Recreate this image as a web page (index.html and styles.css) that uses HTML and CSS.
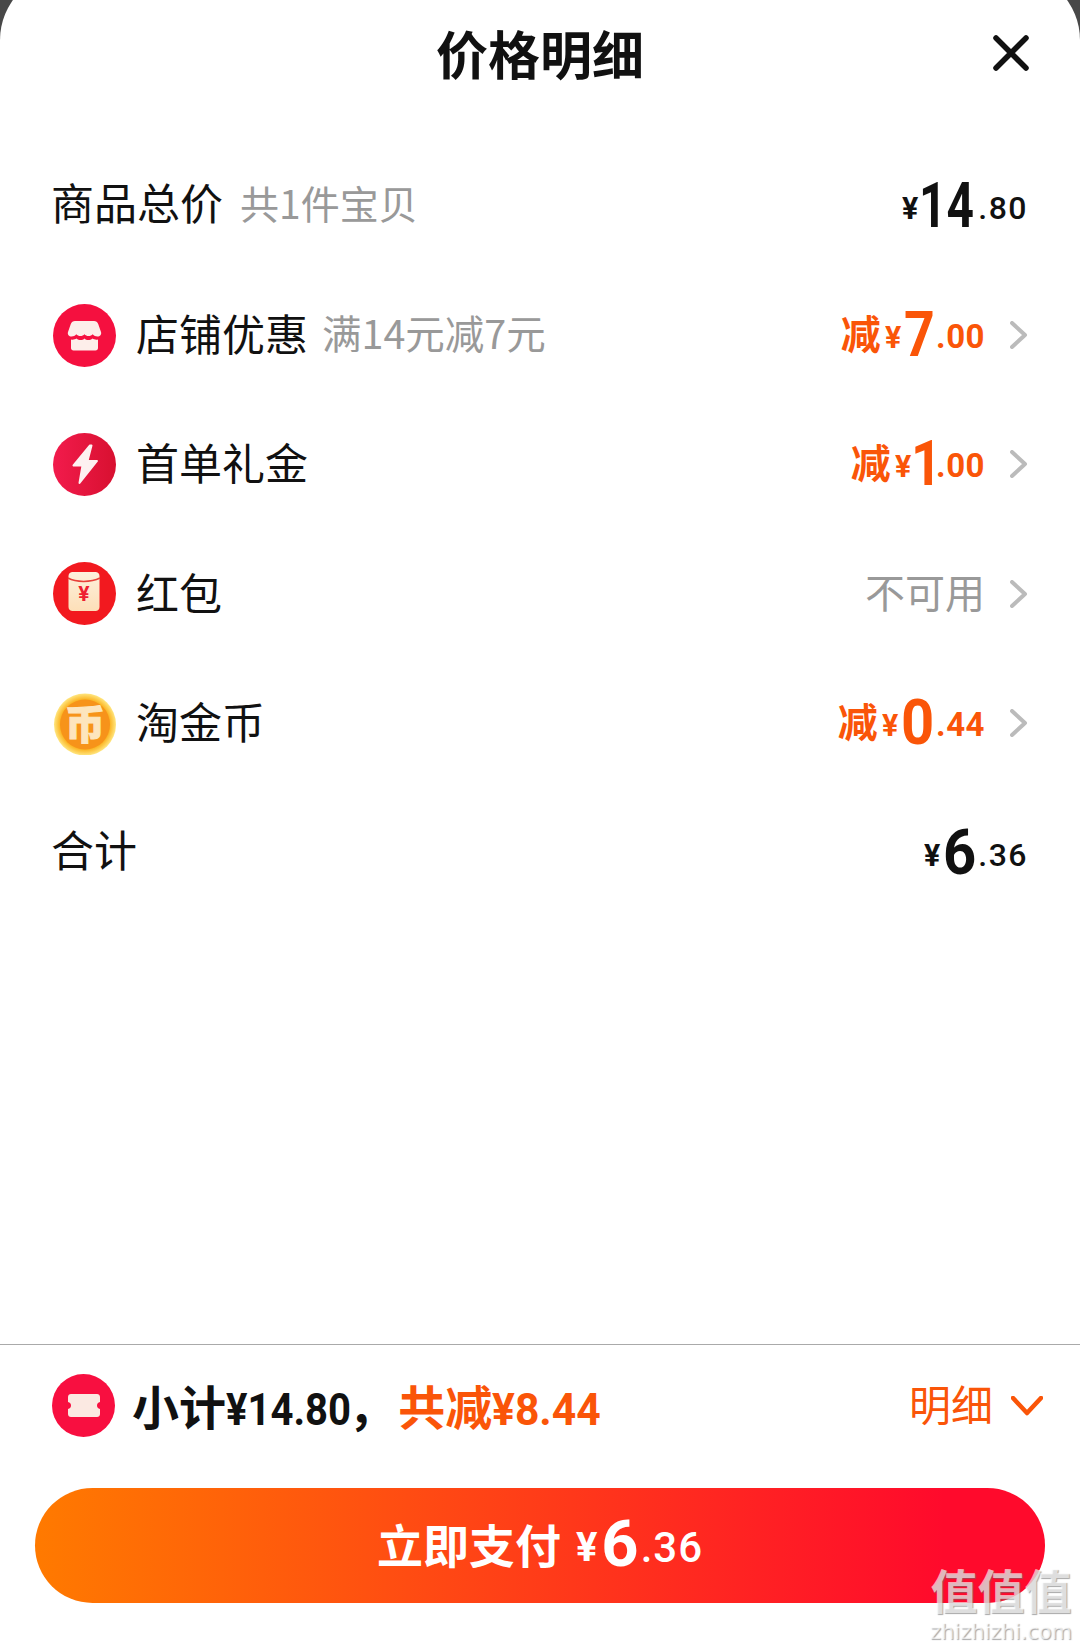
FILE: index.html
```html
<!DOCTYPE html>
<html lang="zh-CN">
<head>
<meta charset="utf-8">
<title>价格明细</title>
<link rel="stylesheet" href="styles.css">
</head>
<body>
<main class="sheet">
  <header class="header">
    <h1 class="title">价格明细</h1>
    <svg class="close" viewBox="0 0 36 36"><path d="M3 3 L33 33 M33 3 L3 33" /></svg>
  </header>
  <section class="list">
    <div class="row">
      <div class="left"><span class="label">商品总价</span><span class="hint hint-wide">共1件宝贝</span></div>
      <div class="price dark"><span class="yen">¥</span><span class="int int-2">14</span><span class="dec">.80</span></div>
    </div>
    <div class="row">
      <div class="left">
        <svg class="icon" viewBox="0 0 63 63"><circle cx="31.500" cy="31.500" r="31.500" fill="#f5103f"/><path fill="#fdeeea" d="M22 17h19c2 0 3.500 1 4.200 3l2.800 8c.8 2.500-1 4.500-3.500 4.500-2 0-3.500-1-4.800-2.300-1.800 2.400-6.400 2.400-8.200 0-1.800 2.400-6.400 2.400-8.200 0-1.300 1.300-2.800 2.300-4.800 2.300-2.500 0-4.300-2-3.500-4.500l2.800-8c.7-2 2.200-3 4.200-3z"/><path fill="#fdeeea" d="M18 35.500c2 .5 4 0 5.500-1 2.500 2 6 2 8 0 2 2 5.500 2 8 0 1.500 1 3.500 1.500 5.500 1v8.500c0 1.500-1 2.500-2.500 2.500h-22c-1.500 0-2.500-1-2.500-2.500z"/></svg>
        <span class="label">店铺优惠</span><span class="hint">满14元减7元</span>
      </div>
      <div class="right">
        <div class="price orange"><span class="cut">减</span><span class="yen">¥</span><span class="int">7</span><span class="dec">.00</span></div>
        <svg class="chev" viewBox="0 0 18 28"><path d="M2 2 L15 14 L2 26"/></svg>
      </div>
    </div>
    <div class="row">
      <div class="left">
        <svg class="icon" viewBox="0 0 63 63"><defs><linearGradient id="bolt"><stop offset="0" stop-color="#f21b4c"/><stop offset="1" stop-color="#d81030"/></linearGradient></defs><circle cx="31.500" cy="31.500" r="31.500" fill="url(#bolt)"/><path class="bolt-shape" d="M37 12.500 L20.500 32.500 H29.500 L26.500 50 L44 28 H34.500 L38.500 12.500z"/></svg>
        <span class="label">首单礼金</span>
      </div>
      <div class="right">
        <div class="price orange"><span class="cut">减</span><span class="yen">¥</span><span class="int int-one">1</span><span class="dec">.00</span></div>
        <svg class="chev" viewBox="0 0 18 28"><path d="M2 2 L15 14 L2 26"/></svg>
      </div>
    </div>
    <div class="row">
      <div class="left">
        <svg class="icon" viewBox="0 0 63 63"><defs><linearGradient id="env" x2="0" y2="1"><stop offset="0" stop-color="#fdf0dc"/><stop offset="1" stop-color="#fddfb8"/></linearGradient></defs><circle cx="31.500" cy="31.500" r="31.500" fill="#f2191f"/><path fill="url(#env)" d="M15.500 14c0-2.500 2-4 4-4h23c2 0 4 1.500 4 4v31c0 2.500-2 4-4 4h-23c-2 0-4-1.500-4-4z"/><path fill="none" stroke="#e8403a" stroke-width="1.500" d="M15 16c8 4.500 23 4.500 32 0"/><text class="packet-yen" x="31" y="39">¥</text></svg>
        <span class="label">红包</span>
      </div>
      <div class="right">
        <span class="na">不可用</span>
        <svg class="chev" viewBox="0 0 18 28"><path d="M2 2 L15 14 L2 26"/></svg>
      </div>
    </div>
    <div class="row">
      <div class="left">
        <svg class="icon" viewBox="0 0 63 63"><defs><radialGradient id="coin"><stop offset="0.8" stop-color="#fbb320"/><stop offset="1" stop-color="#ffe680"/></radialGradient></defs><circle cx="32" cy="32.500" r="31" fill="url(#coin)"/><circle cx="32" cy="32.500" r="25" fill="#f7931a"/><text class="coin-text" x="32" y="47">币</text></svg>
        <span class="label">淘金币</span>
      </div>
      <div class="right">
        <div class="price orange"><span class="cut">减</span><span class="yen">¥</span><span class="int int-wide">0</span><span class="dec">.44</span></div>
        <svg class="chev" viewBox="0 0 18 28"><path d="M2 2 L15 14 L2 26"/></svg>
      </div>
    </div>
    <div class="row">
      <div class="left"><span class="label">合计</span></div>
      <div class="price dark"><span class="yen">¥</span><span class="int int-wide">6</span><span class="dec">.36</span></div>
    </div>
  </section>
  <footer class="footer">
    <div class="summary">
      <div class="left">
        <svg class="icon icon-sum" viewBox="0 0 63 63"><circle cx="31.500" cy="31.500" r="31.500" fill="#f80f40"/><path fill="#fbe9e2" d="M19 20h26c1.700 0 3 1.300 3 3v5c-2 .5-3 1.800-3 3.500s1 3 3 3.500v5c0 1.700-1.300 3-3 3H19c-1.700 0-3-1.300-3-3v-5c2-.5 3-1.800 3-3.500s-1-3-3-3.500v-5c0-1.700 1.300-3 3-3z"/></svg>
        <span class="sum-text">小计<span class="sum-num sum-num-a">¥14.80</span>，</span><span class="sum-text sum-cut">共减<span class="sum-num sum-num-b">¥8.44</span></span>
      </div>
      <div class="detail"><span>明细</span><svg class="chev-down" viewBox="0 0 32 20"><path d="M2 2 L16 17 L30 2"/></svg></div>
    </div>
    <button class="pay"><span class="pay-label">立即支付</span><span class="pay-yen">¥</span><span class="pay-int">6</span><span class="pay-dec">.36</span></button>
  </footer>
</main>
<div class="mark"><div class="mark-cn">值值值</div><div class="mark-en">zhizhizhi.com</div></div>
</body>
</html>
```
FILE: styles.css
```css
* { box-sizing: border-box; }
html, body { margin: 0; height: 100%; }
body {
  background: #484848;
  overflow: hidden;
  position: relative;
  font-family: "Noto Sans CJK SC", "Noto Sans", sans-serif;
  color: #111;
}
.sheet {
  margin-top: -28px;
  height: 1676px;
  background: #fff;
  border-radius: 68px 68px 0 0;
  display: flex;
  flex-direction: column;
}
.header {
  height: 169px;
  position: relative;
  display: flex;
  justify-content: center;
}
.title {
  margin: 46px 0 0;
  font-size: 52px;
  font-weight: 700;
  line-height: 70px;
}
.close {
  position: absolute;
  right: 51px;
  top: 63px;
  width: 36px;
  height: 36px;
}
.close path { fill: none; stroke: #111; stroke-width: 5.500px; stroke-linecap: round; }
.list { padding: 0 52px 0 53px; }
.row {
  height: 129.400px;
  display: flex;
  align-items: center;
  justify-content: space-between;
}
.left, .right { display: flex; align-items: center; }
.icon { width: 63px; height: 63px; margin-right: 20px; flex: none; }
.label { font-size: 43px; line-height: 60px; padding-bottom: 6px; color: #111; }
.row > .left > .label:first-child { margin-left: -2px; padding-bottom: 9px; }
.hint { font-size: 39.500px; line-height: 60px; padding-bottom: 7px; color: #999; margin-left: 14px; }
.hint-wide { font-size: 39px; margin-left: 17px; padding-bottom: 8px; }
.price {
  display: flex;
  align-items: center;
  font-family: "Roboto", sans-serif;
}
.dark { color: #111; }
.orange { color: #fa5508; }
.yen {
  display: inline-block;
  font-weight: 700;
  font-size: 32px;
  line-height: 40px;
  margin: 4px 2px 0 0;
  transform: scaleX(.95);
  transform-origin: left center;
}
.int {
  display: inline-block;
  font-size: 63px;
  font-weight: 700;
  line-height: 70px;
  margin-right: -4px;
  transform: scaleX(.85);
  transform-origin: left center;
}
.int-2 { margin: 0 -13px 0 -2px; transform: scaleX(.76); }
.int-one { margin: 0 -11px 0 -3px; }
.int-wide { margin-right: -1px; transform: scaleX(.92); }
.dec { font-size: 32px; line-height: 40px; font-weight: 500; letter-spacing: 1.500px; margin-top: 4px; }
.orange .dec { font-size: 33px; font-weight: 700; letter-spacing: .5px; }
.cut { font-family: "Noto Sans CJK SC", sans-serif; font-size: 40px; line-height: 50px; font-weight: 700; margin: 0 4px 6px 0; }
.chev { width: 18px; height: 28px; margin-left: 25px; flex: none; }
.chev path { fill: none; stroke: #bbb; stroke-width: 4px; stroke-linecap: round; stroke-linejoin: round; }
.na { font-size: 40px; line-height: 60px; padding-bottom: 6px; color: #999; }
.bolt-shape { fill: #fdf1f1; stroke: #fdf1f1; stroke-width: 2px; stroke-linejoin: round; }
.packet-yen { font-family: "Roboto", sans-serif; font-size: 21px; font-weight: 700; fill: #ee2030; text-anchor: middle; }
.coin-text {
  font-family: "Noto Sans CJK SC", sans-serif;
  font-size: 40px;
  font-weight: 900;
  fill: #fde5bd;
  stroke: #fde5bd;
  stroke-width: 1px;
  text-anchor: middle;
}
.footer {
  margin-top: auto;
  height: 304px;
  border-top: 1px solid #aaa;
  padding: 0 35px;
  display: flex;
  flex-direction: column;
  flex: none;
}
.summary {
  height: 121px;
  margin: 0 0 22px;
  padding: 0 2px 0 17px;
  display: flex;
  align-items: center;
  justify-content: space-between;
  flex: none;
}
.icon-sum { margin-right: 17px; }
.sum-text { font-size: 47px; line-height: 60px; margin-top: 4px; font-weight: 700; color: #111; white-space: nowrap; }
.sum-num {
  display: inline-block;
  font-family: "Roboto", sans-serif;
  font-size: 44px;
  transform-origin: left center;
}
.sum-num-a { margin-right: -15px; transform: scaleX(.91); }
.sum-num-b { transform: scaleX(.97); }
.sum-cut { color: #fa5508; margin-left: 3px; }
.detail { display: flex; align-items: center; font-size: 42px; line-height: 60px; color: #fa5508; }
.detail span { padding-bottom: 6px; }
.chev-down { width: 32px; height: 20px; margin-left: 18px; }
.chev-down path { fill: none; stroke: #fa5508; stroke-width: 4.500px; stroke-linecap: round; stroke-linejoin: round; }
.pay {
  height: 115px;
  width: 1010px;
  flex: none;
  border: 0;
  border-radius: 58px;
  background: linear-gradient(90deg, #ff7a00, #ff0a2c 90%);
  color: #fff;
  font-family: "Roboto", sans-serif;
  font-weight: 700;
  display: flex;
  align-items: center;
  justify-content: center;
  padding: 0;
}
.pay-label { font-family: "Noto Sans CJK SC", sans-serif; font-size: 46px; line-height: 60px; margin: 0 15px 6px 0; }
.pay-yen { font-size: 40px; line-height: 50px; margin: 4px 4px 0 0; }
.pay-int { font-size: 65px; line-height: 70px; margin-bottom: 3px; }
.pay-dec { font-size: 42px; line-height: 50px; font-weight: 500; letter-spacing: 1px; margin: 4px 0 0 2px; }
.mark {
  position: absolute;
  left: 930px;
  top: 1561px;
  width: 142px;
  color: rgba(255, 255, 255, .65);
  text-shadow: 1px 1px 1px rgba(110, 110, 110, .6);
  text-align: center;
}
.mark-cn { font-size: 47px; line-height: 56px; font-weight: 700; white-space: nowrap; }
.mark-en { font-family: "DejaVu Sans", sans-serif; font-size: 21px; line-height: 26px; margin-top: 2px; white-space: nowrap; }
```
